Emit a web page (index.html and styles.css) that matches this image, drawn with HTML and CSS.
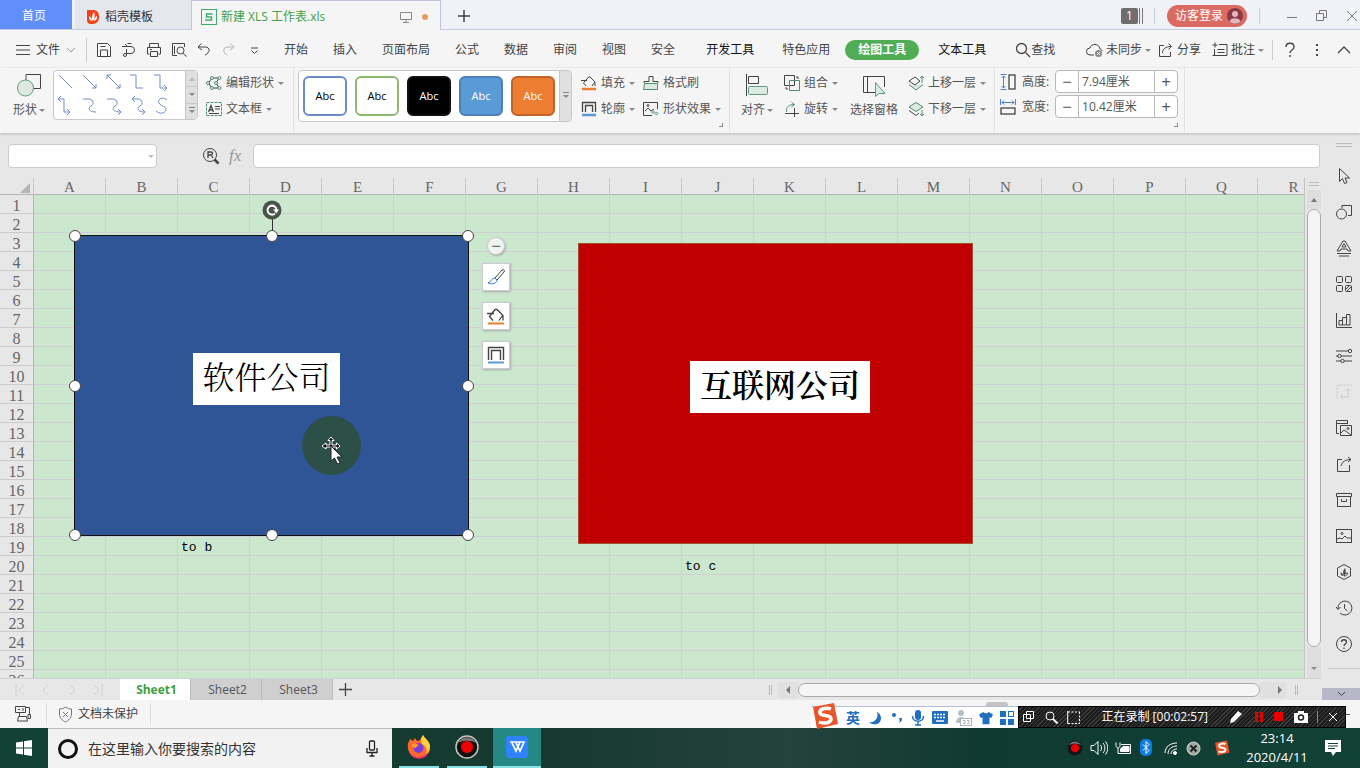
FILE: index.html
```html
<!DOCTYPE html>
<html lang="zh-CN">
<head>
<meta charset="utf-8">
<title>新建 XLS 工作表.xls</title>
<link rel="stylesheet" href="styles.css">
</head>
<body>
<div class="app">

<header class="titlebar">
  <button class="tab tab-home">首页</button>
  <button class="tab tab-docer">
    <svg width="14" height="16" viewBox="0 0 14 16"><path d="M1 1h7a6 6 0 0 1 5 6v2a6 6 0 0 1-6 6H5a4 4 0 0 1-4-4z" fill="#f0441c"/><path d="M7 12C5 10 6 6 8 3c1 3 1 6-1 9zM6 12C3 11 3 9 3 7c2 1 3 3 3 5zM8 12c3-1 3-3 3-5-2 1-3 3-3 5z" fill="#fff"/></svg>
    稻壳模板</button>
  <div class="tab tab-active">
    <svg width="16" height="16" viewBox="0 0 16 16" fill="none" stroke="#3fae6c"><rect x=".5" y=".5" width="15" height="15"/><path d="M11.500 5H5.500v3h5v3H4" stroke-width="1.500"/></svg>
    <span class="tab-title">新建 XLS 工作表.xls</span>
    <svg class="monitor" width="12" height="12" viewBox="0 0 12 12" fill="none" stroke="#888"><path d="M.5 1.500h11v7H.5zM6 8.500v3M3 11.500h6"/></svg>
    <i class="dirty"></i>
  </div>
  <button class="tab-add" aria-label="新建标签"><svg width="12" height="12" viewBox="0 0 12 12" stroke="#444" stroke-width="1.500"><path d="M6 0v12M0 6h12"/></svg></button>
  <div class="window-tools">
    <span class="count">1</span><i class="count-bars"></i>
    <i class="vsep"></i>
    <button class="login">访客登录<svg width="16" height="16" viewBox="0 0 16 16"><circle cx="8" cy="8" r="8" fill="#8c3b46"/><circle cx="8" cy="6" r="3" fill="#e3b7bd"/><path d="M2.500 13.500C3 9 13 9 13.500 13.500A8 8 0 0 1 2.500 13.500z" fill="#e3b7bd"/></svg></button>
    <i class="vsep"></i>
    <button class="win" aria-label="最小化"><svg width="12" height="12" viewBox="0 0 12 12"><path d="M1 7.500h10"/></svg></button>
    <button class="win" aria-label="还原"><svg width="12" height="12" viewBox="0 0 12 12"><path d="M.5 3.500h7v7h-7zM3.500 3.500v-3h7v7h-3"/></svg></button>
    <button class="win" aria-label="关闭"><svg width="12" height="12" viewBox="0 0 12 12"><path d="M1 1l10 10M11 1L1 11"/></svg></button>
  </div>
</header>

<nav class="menubar">
  <button class="file"><svg width="14" height="10" viewBox="0 0 14 10"><path d="M0 .5h14M0 5h14M0 9.500h14"/></svg>文件<svg class="grey" width="10" height="6" viewBox="0 0 10 6"><path d="M1 1l4 4 4-4"/></svg></button>
  <div class="quick">
    <button aria-label="保存"><svg width="16" height="16" viewBox="0 0 16 16"><path d="M1.500 1.500h10l3 3v10h-13zM4.500 14V8h7v6M4.500 4.500h5"/></svg></button>
    <button aria-label="输出"><svg width="16" height="16" viewBox="0 0 16 16"><path d="M1 4.500h9a3.500 3.500 0 1 1 0 7H4a1.500 1.500 0 1 0 1.500 1.500V7M4 2l2.500 2.500M6.500 1.500h4"/></svg></button>
    <button aria-label="打印"><svg width="16" height="16" viewBox="0 0 16 16"><path d="M3.500 5V1.500h9V5M3.500 12h-2V5.500h13V12h-2M4.500 9.500h7v5h-7zM4 7.500h2"/></svg></button>
    <button aria-label="打印预览"><svg width="16" height="16" viewBox="0 0 16 16"><path d="M6 13.500H1.500v-12h12V5M12 11.500l3.500 3M3.500 4v8"/><circle cx="9.500" cy="8.500" r="3.500"/></svg></button>
    <button aria-label="撤销"><svg width="16" height="16" viewBox="0 0 16 16"><path d="M5.500 1.500L2 5l4 3M2 5h7c6 0 5 6 0 8"/></svg></button>
    <button aria-label="恢复" class="off"><svg width="16" height="16" viewBox="0 0 16 16"><path d="M9.500 1.500L13 5l-4 3M13 5H7C1 5 2 11 6 13"/></svg></button>
    <button aria-label="更多"><svg width="16" height="16" viewBox="0 0 16 16"><path d="M5 6h7M5.500 8.500l3 3 3-3"/></svg></button>
  </div>
  <div class="menus">
    <button>开始</button><button>插入</button><button>页面布局</button><button>公式</button><button>数据</button><button>审阅</button><button>视图</button><button>安全</button>
  </div>
  <div class="menus wide">
    <button class="dark">开发工具</button><button>特色应用</button><button class="pill">绘图工具</button><button class="dark">文本工具</button>
  </div>
  <button class="search"><svg width="16" height="16" viewBox="0 0 16 16"><circle cx="6.500" cy="6.500" r="5" stroke-width="1.300"/><path d="M10.500 10.500l4.500 4.500" stroke-width="1.300"/></svg>查找</button>
  <div class="menu-right">
    <button class="sync"><svg width="17" height="16" viewBox="0 0 17 16"><path d="M8 13H4a3.500 3.500 0 0 1 0-7c1-5 9-5 10 1 1 0 2 1 2 2"/><circle cx="12.500" cy="11.500" r="3.500" fill="#888" stroke="none"/><path d="M11 10l3 3M14 10l-3 3" stroke="#fff"/></svg>未同步<i class="caret"></i></button>
    <button><svg width="15" height="16" viewBox="0 0 15 16"><path d="M6 3.500H1.500v11h11V10M4.500 11c0-4 3-6.500 8.500-6.500M10.500 1.500l3 3-3 3"/></svg>分享</button>
    <button class="comment"><svg width="16" height="16" viewBox="0 0 16 16"><path d="M3 .5v5M.5 3h5M7 2.500h8v11H2.500V7M5.500 7.500h7M5.500 10.500h7M.5 13.500h3"/></svg>批注<i class="caret"></i></button>
    <i class="vsep"></i>
    <button aria-label="帮助"><svg width="12" height="16" viewBox="0 0 12 16"><path d="M2 5c0-5 8-5 8 0 0 3-4 3-4 6M6 13v2" stroke-width="1.400"/></svg></button>
    <button aria-label="选项"><svg width="4" height="14" viewBox="0 0 4 14"><path d="M2 1v2M2 6v2M2 11v2" stroke-width="2"/></svg></button>
    <button aria-label="收起"><svg width="14" height="8" viewBox="0 0 14 8"><path d="M1 7l6-6 6 6" stroke-width="1.300"/></svg></button>
  </div>
</nav>

<section class="ribbon">
  <button class="big shape-btn">
    <svg width="26" height="24" viewBox="0 0 26 24"><path d="M10 8V1.500h14.500v14H18"/><circle cx="9.500" cy="15" r="8" fill="#dceae2" stroke="#5f9a83"/></svg>
    <span>形状<i class="caret"></i></span></button>
  <div class="gallery lines">
    <svg width="131" height="48" viewBox="0 0 131 48" stroke="#6f8cc4" fill="none">
      <path d="M5 4l13 13M29 4l13 13M42 13v4h-4M53 4l13 13M53 8V4h4M66 13v4h-4M76 4h6v13h7M100 4h6v13h7M110 14l3 3-3 3"/>
      <path d="M4 28h6v13h6M7 25l-3 3 3 3M13 38l3 3-3 3M29 28h6c5 0 5 6 2 7s-3 6 5 6M53 28h6c5 0 5 6 2 7s-3 6 5 6M64 38l3 3-3 3M78 28h6c5 0 5 6 2 7s-3 6 4 6M81 25l-3 3 3 3M88 38l3 3-3 3M113 29c-4-4-10-1-8 3s8 3 7 7-7 4-10 1"/>
    </svg>
    <div class="scroller"><button aria-label="上一行"><i class="caret up faded"></i></button><button aria-label="下一行"><i class="caret"></i></button><button aria-label="展开"><i class="caret bar"></i></button></div>
  </div>
  <div class="stack edit-stack">
    <button><svg width="16" height="16" viewBox="0 0 16 16"><path d="M6 3L2.500 8 6 13M6 3h7l-3 5 3 5H6" stroke="#444"/><g fill="#f5f5f5" stroke="#4f8c74"><circle cx="6" cy="3" r="1.500"/><circle cx="13.500" cy="3" r="1.500"/><circle cx="2" cy="8" r="1.500"/><circle cx="10" cy="8" r="1.500"/><circle cx="6" cy="13" r="1.500"/><circle cx="13.500" cy="13" r="1.500"/></g></svg>编辑形状<i class="caret"></i></button>
    <button><svg width="16" height="16" viewBox="0 0 16 16"><path d="M.5 1.500h15v13H.5z" stroke="#4f8c74" stroke-dasharray="3 1"/><path d="M2.500 11L5 4.500 7.500 11M3.500 9h3" stroke-width="1.300"/><path d="M9 5.500h5M9 8h5M3 12.500h10"/></svg>文本框<i class="caret"></i></button>
  </div>
  <i class="rsep"></i>
  <div class="gallery styles">
    <button class="st st-blue">Abc</button><button class="st st-green">Abc</button><button class="st st-black">Abc</button><button class="st st-fillblue">Abc</button><button class="st st-orange">Abc</button>
    <div class="scroller one"><button aria-label="更多样式"><i class="caret bar"></i></button></div>
  </div>
  <div class="stack fill-stack">
    <button><svg width="16" height="16" viewBox="0 0 16 16"><path d="M0 5.500h6M5 11L2.500 8 7.500 2h1.500l5 5v4M13.500 7.500L11 11"/><path d="M1 14h14" stroke="#ed7d31" stroke-width="2.500"/></svg>填充<i class="caret"></i></button>
    <button><svg width="16" height="16" viewBox="0 0 16 16"><path d="M1.500 11V1.500h13V11M4.500 11V4.500h7V11" stroke-width="1.300"/><path d="M1 14h14" stroke="#5b9bd5" stroke-width="2.500"/></svg>轮廓<i class="caret"></i></button>
  </div>
  <div class="stack effect-stack">
    <button><svg width="16" height="16" viewBox="0 0 16 16"><path d="M1 8V6.500h5v-5h4v5h5V8"/><path d="M1.500 8.500h13v6H.5z" fill="#dceae2" stroke="#4f8c74"/></svg>格式刷</button>
    <button><svg width="16" height="16" viewBox="0 0 16 16"><path d="M9 14.500H.5v-13h14V8M2 10l3-3 3 3 3-2"/><circle cx="5" cy="4.500" r="1"/><path d="M10 9.500l1.500 1.500-1.500 1.500L8.500 11zM13.500 11l1.500 1.500-1.500 1.500-1.500-1.500z" stroke="#4f8c74"/></svg>形状效果<i class="caret"></i></button>
  </div>
  <i class="corner"></i>
  <i class="rsep"></i>
  <button class="big align-btn">
    <svg width="24" height="24" viewBox="0 0 24 24"><path d="M1.500 1v22M3.500 3.500h10v7h-10z"/><rect x="3.500" y="13.500" width="19" height="8" rx="1" fill="#dceae2" stroke="#5f9a83"/></svg>
    <span>对齐<i class="caret"></i></span></button>
  <div class="stack group-stack">
    <button><svg width="16" height="16" viewBox="0 0 16 16"><path d="M.5.5h10v10H.5z"/><path d="M5.500 5.500h10v10h-10z" stroke="#4f8c74"/><path d="M12 2h2v2M2 12v2h2"/></svg>组合<i class="caret"></i></button>
    <button><svg width="16" height="16" viewBox="0 0 16 16"><path d="M2.500 11C2 6 5 3.500 10 3.500M7.500 1l3 2.500L7.500 6" stroke="#4f8c74"/><path d="M1 12.500h14M10.500 7v9" /></svg>旋转<i class="caret"></i></button>
  </div>
  <button class="big">
    <svg width="24" height="24" viewBox="0 0 24 24"><path d="M13 19.500H1.500v-16h21V14M5.500 3.500v16"/><path d="M13.500 9.500v14l3.500-3 6 0z" fill="#dceae2" stroke="#5f9a83"/></svg>
    <span>选择窗格</span></button>
  <div class="stack layer-stack">
    <button><svg width="16" height="16" viewBox="0 0 16 16"><path d="M1 9.500l7 5.500 7-5.500" stroke="#4f8c74" fill="#dceae2"/><path d="M7 2L1 6l6 4 5-4z" fill="#f5f5f5"/><path d="M14 8V1M12 3l2-2 2 2" stroke="#4f8c74"/></svg>上移一层<i class="caret"></i></button>
    <button><svg width="16" height="16" viewBox="0 0 16 16"><path d="M8 1.500L1 6l7 4.500L15 6z" fill="#dceae2" stroke="#4f8c74"/><path d="M1 9.500l7 5L11 12"/><path d="M14 9v6M12 13l2 2 2-2" stroke="#4f8c74"/></svg>下移一层<i class="caret"></i></button>
  </div>
  <i class="rsep"></i>
  <div class="sizes">
    <div class="size">
      <svg width="16" height="16" viewBox="0 0 16 16"><path d="M.5.500h6M.5 15.500h6M3.500 2v12M1.500 4l2-2 2 2M1.500 12l2 2 2-2" stroke="#4d7fd0"/><rect x="9" y="1" width="6" height="14" stroke-width="1.300"/></svg>
      <label for="h">高度:</label>
      <div class="spin"><button aria-label="减小高度">−</button><input id="h" value="7.94厘米"><button aria-label="增大高度">+</button></div>
    </div>
    <div class="size">
      <svg width="16" height="16" viewBox="0 0 16 16"><path d="M.5 0v6M15.500 0v6M2 3.500h12M4 1.500l-2 2 2 2M12 1.500l2 2-2 2" stroke="#4d7fd0"/><rect x="1" y="9" width="14" height="6" stroke-width="1.300"/></svg>
      <label for="w">宽度:</label>
      <div class="spin"><button aria-label="减小宽度">−</button><input id="w" value="10.42厘米"><button aria-label="增大宽度">+</button></div>
    </div>
  </div>
  <i class="corner size-corner"></i>
  <i class="rsep"></i>
</section>

<div class="body">
  <main class="main">
    <div class="formula">
      <div class="namebox"><input aria-label="名称框"><i class="caret faded"></i></div>
      <svg class="lookup" width="18" height="18" viewBox="0 0 18 18"><circle cx="8" cy="8" r="6.500"/><path d="M6 11V5h3c2 0 2 3 0 3H6M9 8l2 3" stroke-width="1.300"/><path d="M12.500 12.500l4 4" stroke-width="2.500"/></svg>
      <span class="fx">fx</span>
      <input class="fbox" aria-label="编辑栏">
    </div>
    <div class="sheet-row">
      <div class="sheet">
        <table class="grid"><thead><tr id="head"><th class="all"><svg width="10" height="10" viewBox="0 0 10 10"><path d="M10 0v10H0z" fill="#b5b5b5"/></svg></th></tr></thead><tbody id="rows"></tbody></table>

        <div class="box blue"><div class="boxtext">软件公司</div>
          <i class="stem"></i>
          <svg class="rotate" width="20" height="20" viewBox="0 0 20 20"><circle cx="10" cy="10" r="9.500" fill="#47544a"/><path d="M13 13.500a4.500 4.500 0 1 1 1.500-3.500" fill="none" stroke="#fff" stroke-width="2"/><path d="M11 9.500h6l-2.500 4z" fill="#fff"/></svg>
          <i class="h nw"></i><i class="h n"></i><i class="h ne"></i><i class="h w"></i><i class="h e"></i><i class="h sw"></i><i class="h s"></i><i class="h se"></i>
        </div>
        <div class="box red"><div class="boxtext strong">互联网公司</div></div>
        <div class="floaters">
          <button class="round" aria-label="收起工具">−</button>
          <button aria-label="样式"><svg width="18" height="18" viewBox="0 0 18 18"><path d="M8 10l7-8c2-1 3 0 2 2l-7 8z"/><path d="M8 10c-4 0-3 4-7 5 4 2 9 0 9-3z" stroke="#3f78d0"/></svg></button>
          <button aria-label="填充"><svg width="18" height="18" viewBox="0 0 18 18"><path d="M0 6.500h7M6 13.500L2.500 9.500 8 2.500h2l6 6v5M15.500 8.500L12 13.500" stroke-width="1.300"/><path d="M1 16.500h16" stroke="#ed7d31" stroke-width="2"/></svg></button>
          <button aria-label="轮廓"><svg width="18" height="18" viewBox="0 0 18 18"><path d="M1.500 14V1.500h15V14M4.500 14V4.500h9V14" stroke-width="1.400"/><path d="M1 16.500h16" stroke="#5b9bd5" stroke-width="2"/></svg></button>
        </div>
        <div class="halo"><svg width="26" height="30" viewBox="0 0 26 30"><path d="M10 1l3 3.500h-2V9h4.500V7l3.500 3-3.500 3v-2H5v2l-4-3 4-3v2h4V4.500H7z" fill="#000" stroke="#fff"/><path d="M10 10v15l3.500-3 3 6 2.500-1-3-6h5z" fill="#fff" stroke="#222"/></svg></div>
      </div>
      <div class="vscroll">
        <i class="grip"></i>
        <button aria-label="向上"><i class="caret up"></i></button>
        <div class="thumb"></div>
        <button aria-label="向下"><i class="caret"></i></button>
      </div>
    </div>
    <div class="tabs">
      <div class="navs">
        <button aria-label="首个"><svg width="10" height="12" viewBox="0 0 10 12"><path d="M1 0v12M9 1L4 6l5 5"/></svg></button>
        <button aria-label="上一个"><svg width="10" height="12" viewBox="0 0 10 12"><path d="M7 1L2 6l5 5"/></svg></button>
        <button aria-label="下一个"><svg width="10" height="12" viewBox="0 0 10 12"><path d="M3 1l5 5-5 5"/></svg></button>
        <button aria-label="末个"><svg width="10" height="12" viewBox="0 0 10 12"><path d="M1 1l5 5-5 5M9 0v12"/></svg></button>
      </div>
      <button class="stab on">Sheet1</button><button class="stab">Sheet2</button><button class="stab">Sheet3</button>
      <button class="addsheet" aria-label="新建工作表"><svg width="13" height="13" viewBox="0 0 13 13"><path d="M6.500 0v13M0 6.500h13" stroke-width="1.300"/></svg></button>
      <div class="hscroll"><i class="vgrip"></i><button aria-label="向左"><i class="caret left"></i></button><div class="hthumb"></div><button class="rbtn" aria-label="向右"><i class="caret right"></i></button><i class="vgrip"></i></div>
    </div>
  </main>
  <aside class="side">
    <i class="grip"></i>
    <button aria-label="选择"><svg width="18" height="18" viewBox="0 0 18 18"><path d="M4.500 1.500v13l3-3 2 5 2.500-1-2-4.500h4.500z"/></svg></button>
    <button aria-label="形状"><svg width="18" height="18" viewBox="0 0 18 18"><path d="M7 5V2.500h9.500v10H13"/><circle cx="6.500" cy="11" r="5"/></svg></button>
    <button aria-label="艺术字"><svg width="18" height="18" viewBox="0 0 18 18"><path d="M2 12L8 2h2l6 10h-3l-1-2H6l-1 2zM7 8l2-3.500L11 8zM2 14.500h14M4 17h10"/></svg></button>
    <button aria-label="组件"><svg width="18" height="18" viewBox="0 0 18 18"><rect x="1.500" y="1.500" width="6" height="6" rx="1"/><rect x="10.500" y="1.500" width="6" height="6" rx="1"/><rect x="1.500" y="10.500" width="6" height="6" rx="1"/><rect x="10.500" y="10.500" width="6" height="6" rx="1"/><path d="M11 14l3-3M12 16l4-4"/></svg></button>
    <button aria-label="图表"><svg width="18" height="18" viewBox="0 0 18 18"><path d="M1.500 2v14.500H17M4 14V9.500h3.500V14zM7.500 14V6.500h4V14zM11.500 14V3.500H15V14z"/></svg></button>
    <button aria-label="属性"><svg width="18" height="18" viewBox="0 0 18 18"><path d="M1 4h12M1 9h2M6 9h11M1 14h5M9 14h8"/><circle cx="15" cy="4" r="1.700"/><circle cx="4.500" cy="9" r="1.700"/><circle cx="7.500" cy="14" r="1.700"/></svg></button>
    <button aria-label="转换" class="off"><svg width="18" height="18" viewBox="0 0 18 18"><path d="M2 16V2h15" stroke-dasharray="2 1"/><path d="M5 14h8V6M10.500 8L13 5.500 15.500 8M8 11.500L5 14l3 2.500"/></svg></button>
    <button aria-label="图库"><svg width="18" height="18" viewBox="0 0 18 18"><path d="M4 14.500H1.500v-13h11V5M1.500 4.500h11M5.500 6.500h11v10h-11zM6 14l3-3 3 2 4 3"/><circle cx="13" cy="9.500" r="1"/></svg></button>
    <button aria-label="分享"><svg width="18" height="18" viewBox="0 0 18 18"><path d="M7 4.500H2.500v12h12V10M6 11c1-4 4-6.500 10-6.500M13 2l3 2.500L13 7"/></svg></button>
    <button aria-label="归档"><svg width="18" height="18" viewBox="0 0 18 18"><path d="M1.500 2.500h15v3h-15zM2.500 5.500v10h13v-10M6.500 8v2.500h5V8"/></svg></button>
    <button aria-label="图片"><svg width="18" height="18" viewBox="0 0 18 18"><rect x="1.500" y="2.500" width="15" height="13"/><path d="M2 12l3-1 2 1 3-3 2 2 4 0"/><circle cx="7" cy="6.500" r="1"/></svg></button>
    <button aria-label="稻壳"><svg width="18" height="18" viewBox="0 0 18 18"><path d="M9 1.500l6.500 3.500v8L9 16.500 2.500 13V5z"/><path d="M9 13C7.500 10 8 7 10 5c1 3 1 6-1 8zM8 13c-1.500 0-2.500-1.500-2.500-3.500 1.500 0 2.500 1.500 2.500 3.500z" fill="#444" stroke="none"/><path d="M9 13c0-2 1.500-3 3.500-3 0 2-1.500 3-3.500 3z"/></svg></button>
    <button aria-label="历史"><svg width="18" height="18" viewBox="0 0 18 18"><path d="M3 10a7 7 0 1 1 2 4M1 8l2 2.500L5.500 8M9.500 5v4.500l3 2.500"/></svg></button>
    <button aria-label="帮助"><svg width="18" height="18" viewBox="0 0 18 18"><circle cx="9" cy="9" r="7.500"/><path d="M6.500 7c0-3 5-3 5 0 0 2-2.500 2-2.500 4M9 12.500V14" stroke-width="1.300"/></svg></button>
    <i class="side-end"></i>
    <button class="fold" aria-label="展开"><svg width="9" height="6" viewBox="0 0 9 6"><path d="M1 1l3.500 3.500L8 1"/></svg></button>
  </aside>
</div>

<footer class="status">
  <svg width="18" height="18" viewBox="0 0 18 18"><path d="M1.500 1.500h10v6h-10zM4 4.500h2M9 3v3M11.500 2.500h4v7M5.500 7.500v4M4.500 11.500h8l1 4.500H3.500zM14 9.500v4h2.500v-4z"/></svg>
  <i class="vsep"></i>
  <button class="protect"><svg width="15" height="17" viewBox="0 0 15 17"><path d="M7.500 1c2 1.500 4 2 6 2v5c0 4-3 6.500-6 8-3-1.500-6-4-6-8V3c2 0 4-.5 6-2zM5 6l5 5M10 6l-5 5" stroke="#777"/></svg>文档未保护</button>
  <i class="vsep"></i>
  <i class="bump"></i>
  <i class="dash"></i>
  <div class="overlay">
    <div class="ime">
      <svg class="sogou" width="28" height="28" viewBox="0 0 28 28"><path d="M2 5L23 1l4 21-21 5z" fill="#e8562a"/><path d="M20 7C15 5 8 7 9 11c1 4 11 1 11 6 0 4-7 5-12 3" fill="none" stroke="#fff" stroke-width="3.500"/></svg>
      <b>英</b>
      <svg width="16" height="16" viewBox="0 0 16 16"><path d="M10 2c2 6-2 11-8 10 4 4 12 3 12-4 0-3-2-5-4-6z" fill="#1f6fc0"/></svg>
      <svg width="14" height="16" viewBox="0 0 14 16"><circle cx="4" cy="5" r="2" fill="#1f6fc0"/><path d="M9 8h3c0 3-1 4-3 5 1-2 1-3 0-5z" fill="#1f6fc0"/></svg>
      <svg width="14" height="16" viewBox="0 0 14 16"><rect x="4" y="0" width="6" height="10" rx="3" fill="#1f6fc0"/><path d="M1.500 6c0 7 11 7 11 0M7 11v4M4 15h6" fill="none" stroke="#1f6fc0" stroke-width="1.500"/></svg>
      <svg width="16" height="14" viewBox="0 0 16 14"><rect width="16" height="13" rx="1" fill="#1f6fc0"/><path d="M2 3.500h12M2 6.500h12" stroke="#fff" stroke-width="1.500" stroke-dasharray="2 1"/><path d="M4 10h8" stroke="#fff" stroke-width="1.500"/></svg>
      <svg width="17" height="16" viewBox="0 0 17 16"><circle cx="6" cy="3" r="3" fill="#b6bec9"/><path d="M1 13c0-8 10-8 10 0z" fill="#b6bec9"/><rect x="5.500" y="8.500" width="11" height="7" fill="#fff" stroke="#aab3bf"/><path d="M8 10.500h2v3H8M12 10.500h2v3h-2" fill="none" stroke="#aab3bf"/></svg>
      <svg width="14" height="14" viewBox="0 0 16 14"><path d="M5 0c1 2 5 2 6 0l5 3-2 4-2-1v8H4V6L2 7 0 3z" fill="#1f6fc0"/></svg>
      <svg width="14" height="14" viewBox="0 0 14 14"><path d="M0 0h6v6H0zM0 8h6v6H0zM8 8h6v6H8z" fill="#1f6fc0"/><rect x="8.500" y=".5" width="5" height="5" fill="none" stroke="#1f6fc0"/></svg>
    </div>
    <div class="rec">
      <svg width="12" height="12" viewBox="0 0 12 12"><path d="M.5 3.500h7v7h-7zM3.500.5h7v7h-7z"/></svg>
      <svg width="13" height="13" viewBox="0 0 13 13"><circle cx="5" cy="5" r="4"/><path d="M8 8l4.500 4.500" stroke-width="2"/></svg>
      <svg width="13" height="13" viewBox="0 0 13 13"><path d="M1 1h12M12.500 1v12M1 12.500h12" stroke-dasharray="2 1.500"/><path d="M.7 0v13"/></svg>
      <span class="rec-text">正在录制 [00:02:57]</span>
      <svg width="14" height="14" viewBox="0 0 14 14"><path d="M1 13l1-4 7-8 4 3-8 8z" fill="#fff" stroke="none"/></svg>
      <svg width="12" height="12" viewBox="0 0 12 12"><path d="M2 1h3v10H2zM7 1h3v10H7z" fill="#e00000" stroke="none"/></svg>
      <svg width="10" height="10" viewBox="0 0 10 10"><path d="M0 0h9v9H0z" fill="#e80000" stroke="none"/></svg>
      <svg width="14" height="12" viewBox="0 0 14 12"><path d="M0 2h4V0h6v2h4v10H0z" fill="#fff" stroke="none"/><circle cx="7" cy="6.500" r="2.500" fill="#fff" stroke="#222" stroke-width="1.500"/></svg>
      <i class="recsep"></i>
      <svg width="10" height="10" viewBox="0 0 10 10"><path d="M1 1l8 8M9 1L1 9"/></svg>
    </div>
  </div>
</footer>

<div class="taskbar">
  <button class="start" aria-label="开始菜单"><svg width="16" height="16" viewBox="0 0 16 16"><path d="M0 2.500l7-1v6H0zM8 1.300L16 0v7.500H8zM0 8.500h7v6l-7-1zM8 8.500h8V16l-8-1.300z" fill="#fff"/></svg></button>
  <label class="tsearch"><svg width="22" height="22" viewBox="0 0 22 22"><circle cx="11" cy="11" r="8.500" fill="none" stroke="#111" stroke-width="3"/></svg>
    <input placeholder="在这里输入你要搜索的内容" aria-label="搜索">
    <svg width="12" height="17" viewBox="0 0 12 17" fill="none" stroke="#222" stroke-width="1.300"><rect x="3.500" y="1" width="5" height="9" rx="1"/><path d="M1 8v4.500h10V8M6 12.500V16M3.500 16h5"/></svg></label>
  <div class="apps">
    <button aria-label="Firefox"><svg width="24" height="24" viewBox="0 0 24 24"><path d="M3 4l3 2 2-3 2 3 3-1 3-5c1 3 6 5 7 11a11 11 0 0 1-22 2C0 9 2 7 3 4z" fill="#ff6a2b"/><path d="M16 0c1 3 6 5 7 11 0 4-1 7-4 9 2-5 0-9-4-11-2-3-1-6 1-9z" fill="#ffd23c"/><circle cx="11.500" cy="13" r="5" fill="#7a3ddb"/><path d="M5 9c3-2 5 0 7 1-2 1-3 2-3 3-2 0-4-1-4-4z" fill="#ff9a2e"/><path d="M2 17c4 6 14 8 20-1-2 9-16 11-20 1z" fill="#f2317a"/></svg></button>
    <button aria-label="录屏"><svg width="24" height="24" viewBox="0 0 24 24"><circle cx="12" cy="12" r="11" fill="#111" stroke="#c5c5c5" stroke-width="1.500"/><path d="M3 8a10 10 0 0 1 18 0c-5-3-13-3-18 0z" fill="#777"/><circle cx="12" cy="12" r="6" fill="#f00000"/></svg></button>
    <button class="cur" aria-label="WPS"><svg width="22" height="22" viewBox="0 0 22 22"><rect width="22" height="22" rx="3" fill="#2f83ff"/><path d="M4 6h10l-4 9L6 7M10 7l4 8 4-9h-3" fill="none" stroke="#fff" stroke-width="1.700"/></svg></button>
  </div>
  <div class="tray">
    <svg width="16" height="16" viewBox="0 0 16 16"><g stroke="none"><circle cx="8" cy="8" r="7.500" fill="#151515"/><path d="M2 5a7 7 0 0 1 12 0c-4-2-8-2-12 0z" fill="#777"/><circle cx="8" cy="8" r="4" fill="#e80000"/></g></svg>
    <svg width="18" height="16" viewBox="0 0 18 16"><path d="M1 5.500h3l4-4v13l-4-4H1zM10.500 5c1.500 2 1.500 4 0 6M13 3c2.500 3 2.500 7 0 10M15.500 1.500c3 4 3 9 0 13"/></svg>
    <svg width="18" height="16" viewBox="0 0 18 16"><path d="M6 4.500h9.500v9H3V10M1 2.500v3c0 3 4 3 4 0v-3M3 8v2"/><path d="M8 6.500h6v5H5.500V9z" fill="#fff"/></svg>
    <svg width="12" height="18" viewBox="0 0 12 18"><rect width="12" height="17" rx="5" fill="#0c7ce0" stroke="none"/><path d="M3 5.500l6 6-3 3V2.500l3 3-6 6"/></svg>
    <svg class="wifi" width="16" height="16" viewBox="0 0 16 16"><path d="M2 13C2 7 7 3 14 3M5 14c0-5 4-8 9-8M8 14c0-3 3-5 6-5"/><circle cx="12" cy="13" r="1.500" fill="#fff"/></svg>
    <svg width="15" height="15" viewBox="0 0 15 15"><circle cx="7.500" cy="7.500" r="6.500" fill="#9da8a2" stroke="#ccd4cf"/><path d="M4.500 4.500l6 6M10.500 4.500l-6 6" stroke="#222" stroke-width="2"/></svg>
    <svg class="tray-s" width="16" height="16" viewBox="0 0 28 28"><path d="M2 5L23 1l4 21-21 5z" fill="#e8562a" stroke="none"/><path d="M20 7C15 5 8 7 9 11c1 4 11 1 11 6 0 4-7 5-12 3" stroke-width="3.500"/></svg>
    <div class="clock"><span>23:14</span><span>2020/4/11</span></div>
    <svg width="16" height="16" viewBox="0 0 16 16"><path d="M0 0h16v12h-5l-3 4-2-4H0z" fill="#fff" stroke="none"/><path d="M3 3.500h10M3 6h10M3 8.500h7" stroke="#124236"/></svg>
  </div>
</div>
</div>
<script src="grid.js"></script>
</body>
</html>
```
FILE: grid.js
```js
const columns = 'ABCDEFGHIJKLMNOPQR'.split('');
const values = { C19: 'to b', J20: 'to c' };
const head = document.getElementById('head');
columns.forEach(c => {
  const th = document.createElement('th');
  th.scope = 'col';
  th.textContent = c;
  head.appendChild(th);
});
const rows = document.getElementById('rows');
for (let r = 1; r <= 26; r++) {
  const tr = document.createElement('tr');
  const th = document.createElement('th');
  th.scope = 'row';
  th.textContent = r;
  tr.appendChild(th);
  columns.forEach(c => {
    const td = document.createElement('td');
    td.textContent = values[c + r] || '';
    tr.appendChild(td);
  });
  rows.appendChild(tr);
}
```
FILE: styles.css
```css
* { box-sizing: border-box; }
body { margin: 0; font: 12px/16px "Open Sans", "Noto Sans CJK SC", sans-serif; color: #444; }
button { border: 0; background: none; padding: 0; margin: 0; font: inherit; color: inherit; display: flex; align-items: center; justify-content: center; white-space: nowrap; flex: none; }
input { font: inherit; color: inherit; border: 0; outline: 0; min-width: 0; padding: 0; }
svg { flex: none; display: block; }
i { flex: none; }
.app { height: 100vh; display: flex; flex-direction: column; overflow: hidden; background: #e7e7e7; }

.caret { border: 3px solid transparent; border-top-color: #888; border-bottom: 0; display: block; position: relative; }
.caret.up { border-top: 0; border-bottom: 4px solid #777; }
.caret.left { border: 4px solid transparent; border-right-color: #777; border-left: 0; }
.caret.right { border: 4px solid transparent; border-left-color: #777; border-right: 0; }
.caret.faded { border-top-color: #bbb; border-bottom-color: #bbb; }
.caret.bar::before { content: ""; position: absolute; left: -3px; top: -6px; width: 6px; height: 1px; background: #888; }
.vsep { width: 1px; height: 16px; background: #ccc; }

/* title bar */
.titlebar { height: 30px; flex: none; display: flex; background: #f1f2f7; border-bottom: 1px solid #c8cbe0; }
.tab { height: 29px; }
.tab-home { width: 72px; background: #5f8ffa; color: #fff; margin-right: 3px; padding: 2px 4px 0 0; }
.tab-docer { width: 116px; background: #e5e7ef; justify-content: flex-start; padding: 4px 0 0 11px; gap: 5px; color: #333; }
.tab-active { width: 250px; height: 30px; background: #f5f5f5; border: 1px solid #c0c4dc; border-bottom: 0; display: flex; align-items: center; padding: 3px 12px 0 9px; gap: 4px; color: #44a148; }
.tab-title { flex: 1; }
.monitor { margin-right: 6px; }
.dirty { width: 6px; height: 6px; border-radius: 3px; background: #e0a060; }
.tab-add { width: 46px; padding-top: 3px; }
.window-tools { margin-left: auto; display: flex; align-items: center; padding: 2px 2px 0 0; }
.count { width: 17px; height: 16px; background: #6e6e6e; color: #fff; border-radius: 2px; text-align: center; }
.count-bars { width: 4px; height: 16px; border: solid #777; border-width: 0 1px; margin: 0 11px 0 1px; }
.login { height: 22px; width: 80px; border-radius: 11px; background: #db6a62; color: #fff; gap: 4px; margin: 0 12px; padding-left: 4px; }
.win { width: 12px; height: 20px; margin-left: 18px; }
.login + .vsep + .win { margin-left: 26px; }
.win svg { stroke: #777; fill: none; }

/* menu bar */
.menubar { height: 38px; flex: none; display: flex; align-items: center; background: #f5f5f5; padding-top: 2px; }
.menubar svg, .ribbon svg, .lookup, .tabs svg, .side svg, .status > svg, .protect svg, .floaters svg { fill: none; stroke: #444; }
.ribbon .lines svg { stroke: #6f8cc4; }
.menubar .grey { stroke: #999; }
.file { width: 87px; height: 24px; border-right: 1px solid #ccc; justify-content: flex-start; padding-left: 16px; gap: 6px; }
.quick { display: flex; gap: 9px; margin-left: 9px; }
.off { opacity: .35; }
.side .off { opacity: .15; }
.menus { display: flex; align-items: center; gap: 25px; margin-left: 22px; }
.menus.wide { gap: 28px; margin-left: 31px; }
.dark { color: #111; }
.pill { background: #50ad55; color: #fff; font-weight: bold; height: 20px; border-radius: 10px; padding: 0 13px; margin: 0 -9px 0 -13px; }
.search { margin-left: 29px; }
.menu-right { margin-left: auto; display: flex; align-items: center; padding-right: 9px; }
.menu-right button { gap: 4px; margin-right: 11px; }
.menu-right .sync { gap: 3px; margin-right: 7px; }
.menu-right .comment { gap: 3px; margin-right: 8px; }
.menu-right .vsep { margin: 0 11px 0 0; height: 20px; }
.menu-right .vsep ~ button { margin-right: 19px; }
.menu-right button:last-child { margin-right: 0; margin-left: -1px; }

/* ribbon */
.ribbon { height: 65px; flex: none; display: flex; align-items: flex-start; background: #f5f5f5; box-shadow: 0 1px 3px #bbb; position: relative; color: #555; }
.big { flex-direction: column; margin-top: 5px; gap: 5px; }
.big span { display: flex; align-items: center; gap: 2px; }
.shape-btn { margin-left: 12px; width: 34px; }
.gallery { background: #fff; border: 1px solid #c8c8c8; border-radius: 4px; display: flex; overflow: hidden; margin-top: 2px; flex: none; }
.lines { width: 145px; height: 50px; margin-left: 7px; }
.scroller { width: 12px; background: #e0e0e0; border-left: 1px solid #c8c8c8; display: flex; flex-direction: column; }
.scroller button { flex: 1; border-bottom: 1px solid #c8c8c8; }
.scroller button:last-child { border-bottom: 0; }
.stack { display: flex; flex-direction: column; gap: 10px; margin-top: 7px; align-items: flex-start; }
.stack button { gap: 4px; height: 16px; }
.edit-stack { margin-left: 8px; }
.rsep { width: 1px; height: 64px; background: #e2e2e2; }
.edit-stack + .rsep { margin-left: 9px; }
.styles { width: 274px; height: 52px; margin-left: 4px; padding-left: 4px; align-items: center; gap: 8px; }
.st { width: 44px; height: 40px; border-radius: 6px; border: 2px solid; color: #000; font-size: 11px; }
.st-blue { border-color: #6c8cc8; }
.st-green { border-color: #8fb96c; }
.st-black { background: #000; border-color: #111; color: #fff; }
.st-fillblue { background: #5b9bd5; border-color: #4b81b5; color: #fff; }
.st-orange { background: #ed7d31; border-color: #c0652a; color: #fff; }
.scroller.one { height: 100%; width: 13px; margin-left: -4px; }
.fill-stack { margin-left: 9px; }
.effect-stack { margin-left: 8px; }
.corner { width: 4px; height: 4px; border: solid #888; border-width: 0 1px 1px 0; margin: 55px 6px 0 -2px; }
.size-corner { margin: 55px 6px 0 -4px; }
.align-btn { margin-left: 10px; width: 34px; }
.group-stack { margin: 7px 12px 0 10px; }
.layer-stack { margin-left: 10px; }
.layer-stack + .rsep { margin-left: 8px; }
.sizes { display: flex; flex-direction: column; gap: 2px; margin: 2px 0 0 5px; }
.size { display: flex; align-items: center; gap: 6px; }
.size label { width: 27px; white-space: nowrap; }
.spin { display: flex; width: 123px; height: 23px; border: 1px solid #b8b8b8; border-radius: 4px; background: #fff; overflow: hidden; }
.spin button { width: 22px; font-size: 17px; color: #555; }
.spin input { flex: 1; border: solid #b8b8b8; border-width: 0 1px; padding-left: 3px; }

/* workspace */
.body { flex: 1; min-height: 0; display: flex; }
.main { flex: 1; min-width: 0; display: flex; flex-direction: column; }
.formula { height: 45px; flex: none; display: flex; align-items: center; padding: 1px 2px 0 8px; }
.namebox { width: 149px; height: 24px; background: #fff; border: 1px solid #ccc; border-radius: 4px; display: flex; align-items: center; padding: 0 2px 0 4px; }
.namebox input { flex: 1; }
.lookup { margin: 0 9px 0 45px; }
.fx { width: 16px; font: italic 17px/20px "Liberation Serif", serif; color: #999; margin-right: 8px; }
.fbox { flex: 1; height: 24px; border: 1px solid #ccc; border-radius: 4px; background: #fff; padding: 0 6px; }
.sheet-row { flex: 1; min-height: 0; display: flex; }
.sheet { flex: 1; min-width: 0; position: relative; overflow: hidden; border-right: 1px solid #c4c4c4; background: #cbe8cf; }
.grid { table-layout: fixed; border-spacing: 0; width: 1330px; color: #000; font: 13px/14px "Liberation Mono", monospace; }
.grid th, .grid td { padding: 0; height: 19px; border: solid #cfcfd4; border-width: 0 1px 1px 0; width: 72px; }
.grid td { padding: 4px 0 0 3px; white-space: nowrap; }
.grid thead th { height: 17px; padding-top: 2px; background: #e7e7e7; border-color: #b5b5b5; border-right-color: #c8c8c8; color: #666; font: 15px/14px "Liberation Serif", serif; }
.grid tbody th { background: #e7e7e7; border-color: #ccc; border-right-color: #b5b5b5; padding-top: 4px; color: #666; font: 16px/14px "Liberation Serif", serif; }
.grid thead th.all { width: 34px; padding: 0; }
.all svg { margin: 4px 0 0 20px; }

.box { position: absolute; width: 395px; height: 301px; }
.blue { left: 74px; top: 57px; background: #2f5597; border: 1px solid #111; }
.red { left: 578px; top: 65px; background: #c00000; border: 1px solid #a0522d; }
.boxtext { position: absolute; left: 118px; top: 117px; width: 147px; height: 52px; background: #fff; color: #000; font: 300 32px/44px "Noto Serif CJK SC", "Noto Sans CJK SC", serif; text-align: center; }
.boxtext.strong { left: 111px; width: 180px; font-weight: 600; }
.h { position: absolute; width: 12px; height: 12px; border-radius: 6px; background: #fff; border: 1px solid #444; margin: -6px; }
.nw, .w, .sw { left: 0; }
.n, .s { left: 50%; }
.ne, .e, .se { left: 100%; }
.nw, .n, .ne { top: 0; }
.w, .e { top: 50%; }
.sw, .s, .se { top: 100%; }
.stem { position: absolute; left: 50%; top: -18px; width: 1px; height: 18px; background: #333; }
.rotate { position: absolute; left: 187px; top: -36px; }
.floaters { position: absolute; left: 482px; top: 59px; display: flex; flex-direction: column; align-items: center; gap: 11px; }
.floaters button { width: 28px; height: 28px; background: #fff; border: 1px solid #ccc; box-shadow: 1px 1px 2px #aaa; }
.floaters .round { width: 18px; height: 18px; border-radius: 9px; font-size: 17px; color: #555; background: #eef5ee; margin-bottom: -3px; }
.halo { position: absolute; left: 302px; top: 238px; width: 59px; height: 59px; border-radius: 50%; background: #2c4f47; padding: 20px 0 0 19px; }

.vscroll { width: 17px; flex: none; display: flex; flex-direction: column; align-items: center; padding-left: 1px; }
.grip { width: 10px; height: 4px; border: solid #bbb; border-width: 1px 0; margin: 4px 0; }
.vscroll button { width: 14px; height: 19px; background: #dedede; }
.thumb { flex: 1; width: 14px; background: #f5f5f5; border: 1px solid #aaa; border-radius: 7px; }
.vscroll .thumb + button { height: 31px; padding-top: 12px; }

.tabs { height: 22px; flex: none; display: flex; border-top: 1px solid #d2d2d2; }
.navs { width: 120px; display: flex; align-items: center; gap: 16px; padding-left: 15px; opacity: .15; }
.stab { width: 71px; background: #cfcfcf; border-right: 1px solid #bbb; color: #555; font-size: 12px; padding-left: 3px; }
.stab.on { background: #fff; color: #3f9f43; font-weight: bold; }
.addsheet { width: 25px; }
.hscroll { width: 40%; margin-left: auto; margin-right: 24px; display: flex; align-items: center; }
.hscroll button { width: 20px; height: 16px; background: #e0e0e0; }
.hscroll .rbtn { width: 26px; padding-left: 14px; margin-right: 4px; }
.hscroll button:first-of-type { margin-left: 6px; }
.vgrip { width: 3px; height: 10px; border: solid #bbb; border-width: 0 1px; }
.hscroll .rbtn + .vgrip { margin-left: 5px; }
.hthumb { flex: 1; height: 14px; border: 1px solid #aaa; border-radius: 7px; background: #f5f5f5; }

.side { width: 38px; flex: none; display: flex; flex-direction: column; align-items: center; padding-left: 6px; }
.side .grip { width: 16px; margin: 10px 0 11px; }
.side button { height: 36px; width: 32px; }
.side-end { height: 1px; width: 32px; background: #ccc; margin-top: 6px; }
.side .fold { margin-top: auto; margin-left: -6px; height: 12px; width: 38px; background: #b7b7c9; }

/* status bar and the windows floating over it */
.status { height: 28px; flex: none; position: relative; display: flex; align-items: center; background: #f5f5f5; padding-left: 14px; }
.status .vsep { height: 22px; background: #ddd; }
.status > svg { margin-right: 14px; }
.protect { gap: 5px; margin: 0 12px 0 11px; }
.overlay { position: absolute; right: 14px; bottom: 0; display: flex; height: 22px; }
.bump { position: absolute; right: 352px; top: 2px; width: 22px; height: 6px; border-radius: 4px; background: #c4c4c8; }
.dash { position: absolute; right: 10px; top: 14px; width: 6px; height: 1px; background: #555; }
.ime { background: #fff; border-top: 1px solid #b9bdd0; display: flex; align-items: center; gap: 7px; padding-right: 4px; }
.ime b { color: #1f6fc0; font-size: 14px; }
.sogou { margin: -4px 0 0 0; }
.rec { width: 328px; border: 1px solid #000; background: repeating-linear-gradient(135deg, #1c1c1c 0 2px, #3c3c3c 2px 3px); color: #fff; display: flex; align-items: center; justify-content: space-between; padding: 0 7px 0 4px; }
.rec svg { fill: none; stroke: #fff; }
.rec-text { margin: 0 12px; }
.recsep { width: 1px; height: 12px; background: #888; }

/* system task bar */
.taskbar { height: 40px; flex: none; display: flex; background: linear-gradient(90deg, #124236, #16392f 40%, #25423c 58%, #0f3a31 72%, #124236); color: #fff; }
.start { width: 48px; }
.tsearch { width: 344px; background: #f2f2f2; border-top: 1px solid #bbb; display: flex; align-items: center; gap: 9px; padding: 0 14px 0 9px; }
.tsearch input { flex: 1; background: none; font-size: 14px; height: 24px; }
.tsearch input::placeholder { color: #333; opacity: 1; }
.apps { display: flex; gap: 8px; padding-left: 7px; }
.apps button { width: 40px; border-bottom: 2px solid #86dfe0; }
.apps .cur { width: 48px; background: #248885; margin-left: -2px; }
.tray { margin-left: auto; display: flex; align-items: center; gap: 7px; padding-right: 19px; }
.tray svg { fill: none; stroke: #fff; }
.wifi { margin-left: 4px; }
.tray-s { margin-left: 6px; }
.clock { width: 68px; margin: 0 7px 0 6px; text-align: center; font-size: 13px; line-height: 19px; display: flex; flex-direction: column; }
```
